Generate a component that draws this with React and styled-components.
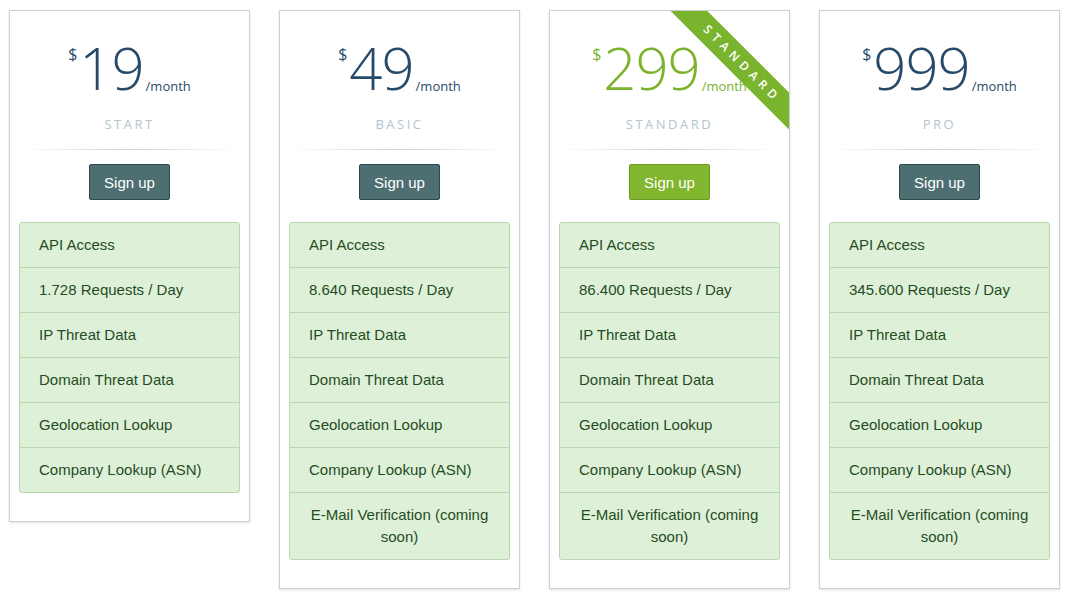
import React from "react";
import styled, { createGlobalStyle } from "styled-components";

const Global = createGlobalStyle`
  body { margin: 0; background: #fff; font-family: "Liberation Sans", Arial, sans-serif; }
`;
const Page = styled.div`
  display: flex; align-items: flex-start; gap: 29px; padding: 10px 9px;
`;
const Card = styled.div`
  position: relative; overflow: hidden; width: 241px; box-sizing: border-box;
  border: 1px solid #d0d0d4; box-shadow: 0 1px 2px rgba(0,0,0,0.12);
  background: #fff; padding: 28px 9px 28px;
  display: flex; flex-direction: column; align-items: center;
`;
const Price = styled.div`
  display: flex; align-items: flex-start; font-family: "Open Sans", sans-serif;
  color: ${p => p.$hl ? "#7ab32e" : "#274a68"}; height: 58px;
`;
const Cur = styled.span` font-size: 16px; margin-top: 4px; margin-right: 2px; `;
const Num = styled.span` font-size: 58px; font-weight: 300; line-height: 58px; letter-spacing: -1px; `;
const Per = styled.span` font-size: 13px; align-self: flex-end; margin-left: 2px; margin-bottom: 2px; `;
const Name = styled.div`
  margin-top: 18px; font-family: "Open Sans", sans-serif; font-size: 13px; letter-spacing: 2.5px;
  color: #b4c4cc;
`;
const Divider = styled.div`
  margin-top: 16px; width: 100%; height: 1px;
  background: linear-gradient(to right, rgba(200,200,200,0), #d0d0d0 50%, rgba(200,200,200,0));
`;
const Button = styled.button`
  margin-top: 14px; height: 36px; padding: 0 14px; border-radius: 2px;
  font-family: "Liberation Sans", Arial, sans-serif; font-size: 15px; color: #fff; cursor: pointer;
  background: ${p => p.$hl ? "#82b62e" : "#4e6f72"};
  border: 1px solid ${p => p.$hl ? "#6a9a22" : "#2f4a4c"};
`;
const List = styled.ul`
  list-style: none; margin: 22px 0 0; padding: 0; width: 100%;
  border: 1px solid #bcd6b0; border-radius: 3px; background: #dff0d8; box-sizing: border-box;
`;
const Item = styled.li`
  padding: 11px 19px; font-size: 15px; line-height: 22px; color: #1f4d1f;
  text-align: ${p => p.$center ? "center" : "left"};
  & + & { border-top: 1px solid #bcd6b0; }
`;
const Ribbon = styled.div`
  position: absolute; top: 40px; right: -48px; width: 190px; transform: rotate(45deg);
  background: #7ab32e; color: #fff; text-align: center; font-family: "Open Sans", sans-serif;
  font-size: 12px; font-weight: 600; letter-spacing: 5px; line-height: 26px;
`;

const plans = [
  { price: "19", name: "START", req: "1.728" },
  { price: "49", name: "BASIC", req: "8.640", email: true },
  { price: "299", name: "STANDARD", req: "86.400", email: true, hl: true },
  { price: "999", name: "PRO", req: "345.600", email: true },
];

export default function App() {
  return (
    <>
      <Global />
      <Page>
        {plans.map(p => (
          <Card key={p.name}>
            {p.hl && <Ribbon>STANDARD</Ribbon>}
            <Price $hl={p.hl}><Cur>$</Cur><Num>{p.price}</Num><Per>/month</Per></Price>
            <Name>{p.name}</Name>
            <Divider />
            <Button $hl={p.hl}>Sign up</Button>
            <List>
              <Item>API Access</Item>
              <Item>{p.req} Requests / Day</Item>
              <Item>IP Threat Data</Item>
              <Item>Domain Threat Data</Item>
              <Item>Geolocation Lookup</Item>
              <Item>Company Lookup (ASN)</Item>
              {p.email && <Item $center>E-Mail Verification (coming soon)</Item>}
            </List>
          </Card>
        ))}
      </Page>
    </>
  );
}
